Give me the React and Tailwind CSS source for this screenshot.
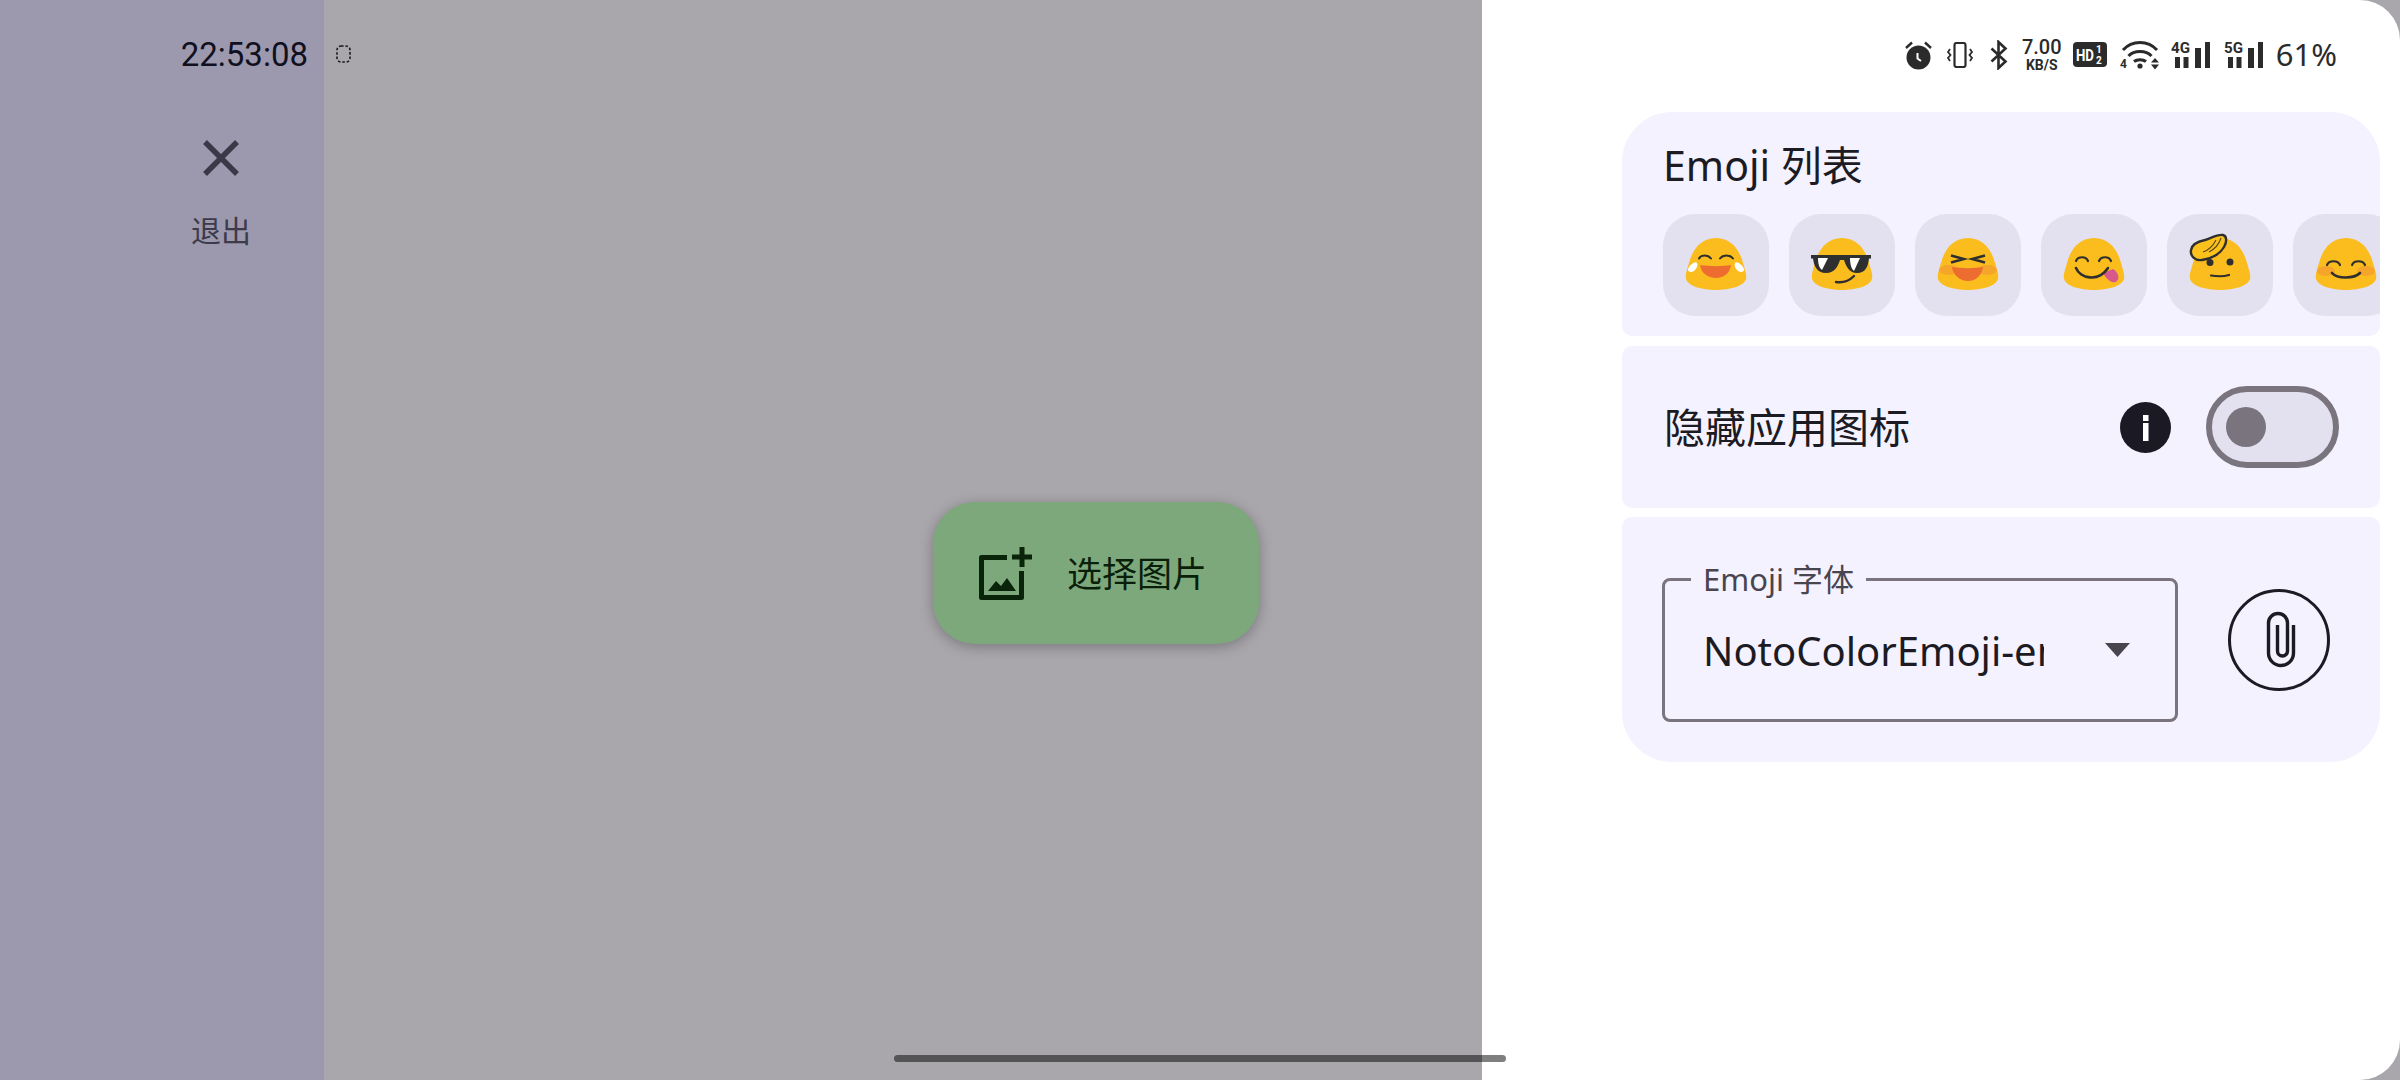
import React from "react";

function Blob({ children }) {
  return (
    <svg viewBox="0 0 106 102" className="w-full h-full">
      <path
        d="M53 24C69 24 77 37 80 49C82 56 84 61 83 65C81 72 67 76 53 76C39 76 25 72 23 65C22 61 24 56 26 49C29 37 37 24 53 24Z"
        fill="#fbbd1d"
      />
      {children}
    </svg>
  );
}

function LaughTears() {
  return (
    <Blob>
      <path d="M36 44.5C38 40.5 45 40.5 48 44.5M57 44.5C60 40.5 67 40.5 70 44.5" stroke="#2f2f2f" strokeWidth="2" fill="none" strokeLinecap="round" />
      <path d="M37 51C46 52.5 60 52.5 68 51C67 59 61 64 53 64C45 64 38 59 37 51Z" fill="#ed6c30" />
      <path d="M33 48C35 50 35 53 31 57C28 59 24.5 58 25 55C26 52 29 49 33 48Z" fill="#fff" />
      <path d="M73 48C71 50 71 53 75 57C78 59 81.5 58 81 55C80 52 77 49 73 48Z" fill="#fff" />
    </Blob>
  );
}

function Sunglasses() {
  return (
    <Blob>
      <path d="M22 41H82V44.5H80C79 52 77 59 68 59C60 59 57 52 55 46H51C49 52 46 59 37 59C28 59 25 52 24 44.5H22Z" fill="#2f2f2f" />
      <path d="M31 44H39L33 56C30 54 29 49 29 44Z" fill="#fff" />
      <path d="M63 44H71L65 57C62 55 61 49 61 44Z" fill="#fff" />
      <path d="M47 68C53 69 60 67 65 62" stroke="#2f2f2f" strokeWidth="2.4" fill="none" strokeLinecap="round" />
    </Blob>
  );
}

function Squint() {
  return (
    <Blob>
      <ellipse cx="34" cy="56" rx="10" ry="5" fill="#f19534" opacity="0.6" />
      <ellipse cx="72" cy="56" rx="10" ry="5" fill="#f19534" opacity="0.6" />
      <path d="M36 41.5L49 45L36 48.5M70 41.5L57 45L70 48.5" stroke="#2f2f2f" strokeWidth="2.4" fill="none" />
      <path d="M37 53C46 54.5 60 54.5 68 53C67 61 61 67 53 67C45 67 38 61 37 53Z" fill="#ed6c30" />
    </Blob>
  );
}

function Tongue() {
  return (
    <Blob>
      <path d="M35 47C37 42 45 42 47 47M58 47C60 42 68 42 70 47" stroke="#2f2f2f" strokeWidth="2.2" fill="none" strokeLinecap="round" />
      <path d="M62 59L72 55C77 58 79 64 76 67C73 70 67 68 62 59Z" fill="#d7598b" />
      <path d="M35 54C39 64 57 69 67 54" stroke="#2f2f2f" strokeWidth="2.6" fill="none" strokeLinecap="round" />
    </Blob>
  );
}

function Salute() {
  return (
    <Blob>
      <circle cx="43" cy="48.5" r="3.5" fill="#2f2f2f" />
      <circle cx="63" cy="48" r="3.5" fill="#2f2f2f" />
      <path d="M44 61.5C50 62.5 57 62.5 62 61" stroke="#2f2f2f" strokeWidth="2.2" fill="none" strokeLinecap="round" />
      <path d="M24 36C25 29 33 27 38 26C44 24 51 20 56 21C60 22 60 28 57 33C53 40 44 45 35 46C28 47 23 42 24 36Z" fill="#fcc21b" stroke="#2f2f2f" strokeWidth="2.4" />
      <path d="M36 38C42 36 46 32 49 26M42 38C48 35 52 30 54 24" stroke="#5f4a18" strokeWidth="1.2" fill="none" />
    </Blob>
  );
}

function Smile() {
  return (
    <Blob>
      <ellipse cx="33" cy="57" rx="9" ry="5" fill="#f19534" opacity="0.6" />
      <ellipse cx="73" cy="57" rx="9" ry="5" fill="#f19534" opacity="0.6" />
      <path d="M34 51C36 46 45 46 47 51M59 51C61 46 70 46 72 51" stroke="#2f2f2f" strokeWidth="2.2" fill="none" strokeLinecap="round" />
      <path d="M39 59C44 65 61 65 67 59" stroke="#2f2f2f" strokeWidth="2.6" fill="none" strokeLinecap="round" />
    </Blob>
  );
}

const emojis = [LaughTears, Sunglasses, Squint, Tongue, Salute, Smile];

function SignalIcon({ label }) {
  return (
    <svg width="39" height="29" viewBox="0 0 39 29">
      <text x="0" y="12.5" fontSize="14" fontWeight="700" fill="#2b2b2b" fontFamily="Roboto, sans-serif" textLength="19" lengthAdjust="spacingAndGlyphs">
        {label}
      </text>
      <rect x="4" y="17" width="5" height="11" fill="#2b2b2b" />
      <rect x="12.5" y="17" width="5" height="11" fill="#2b2b2b" />
      <rect x="24" y="8" width="6" height="20" fill="#2b2b2b" />
      <rect x="34" y="2" width="5" height="26" fill="#2b2b2b" />
    </svg>
  );
}

function StatusIcons() {
  return (
    <div className="flex items-center text-[#2b2b2b]">
      {/* alarm */}
      <svg width="27" height="30" viewBox="0 0 27 30">
        <circle cx="13.5" cy="17.5" r="12" fill="#2b2b2b" />
        <path d="M12.5 13V18.5L16 21" stroke="#fff" strokeWidth="2" fill="none" />
        <path d="M1 8L7 2.5M20 2.5L26 8" stroke="#2b2b2b" strokeWidth="2.4" fill="none" />
      </svg>
      {/* vibrate */}
      <svg width="26" height="26" viewBox="0 0 26 26" className="ml-[15px]">
        <rect x="7.5" y="1" width="11" height="24" rx="2" stroke="#2b2b2b" strokeWidth="2.2" fill="none" />
        <path d="M3 7L1 10L3.5 13L1 16L3 19M23 7L25 10L22.5 13L25 16L23 19" stroke="#2b2b2b" strokeWidth="1.8" fill="none" />
      </svg>
      {/* bluetooth */}
      <svg width="18" height="30" viewBox="0 0 18 30" className="ml-[17px]">
        <path d="M1.5 8.5L15.5 21.5L8.5 28V2L15.5 8.5L1.5 21.5" stroke="#2b2b2b" strokeWidth="2.6" fill="none" />
      </svg>
      <div className="ml-[14px] w-[40px] flex flex-col items-center font-['Roboto',sans-serif] font-medium leading-none">
        <span className="text-[20px] h-[20px]">7.00</span>
        <span className="text-[14px] font-bold mt-[1px]">KB/S</span>
      </div>
      {/* hd badge */}
      <svg width="34" height="25" viewBox="0 0 34 25" className="ml-[11px]">
        <rect width="34" height="25" rx="4" fill="#2b2b2b" />
        <text x="3" y="18.5" fontSize="17" fontWeight="700" fill="#fff" fontFamily="Roboto, sans-serif" textLength="18" lengthAdjust="spacingAndGlyphs">HD</text>
        <text x="23" y="11" fontSize="10" fontWeight="700" fill="#fff" fontFamily="Roboto, sans-serif">1</text>
        <text x="23" y="22" fontSize="10" fontWeight="700" fill="#fff" fontFamily="Roboto, sans-serif">2</text>
      </svg>
      {/* wifi */}
      <svg width="39" height="30" viewBox="0 0 39 30" className="ml-[13px]">
        <path d="M3 10C12 0 28 0 37 10M8.5 16C14 10 26 10 31.5 16M14 21.5C17 19 23 19 26 21.5" stroke="#2b2b2b" strokeWidth="3" fill="none" />
        <circle cx="20" cy="26" r="2.6" fill="#2b2b2b" />
        <text x="0" y="28" fontSize="12" fontWeight="700" fill="#2b2b2b" fontFamily="Roboto, sans-serif">4</text>
        <path d="M31 22.5L35 18L39 22.5ZM31 24.5H39L35 29.5Z" fill="#2b2b2b" />
      </svg>
      <div className="ml-[12px] flex">
        <SignalIcon label="4G" />
      </div>
      <div className="ml-[14px] flex">
        <SignalIcon label="5G" />
      </div>
      <span className="ml-[13px] text-[31px] leading-none font-['Noto_Sans',sans-serif]">61%</span>
    </div>
  );
}

function App() {
  return (
    <div className="relative flex w-[2400px] h-[1080px] overflow-hidden bg-[#a9a7ac] font-['Noto_Sans','Noto_Sans_CJK_SC',sans-serif]">
      {/* Left rail */}
      <aside className="w-[324px] shrink-0 bg-[#9c99ae] flex flex-col pt-[34px]">
        <div className="flex justify-end pr-[16px] h-[40px] items-center text-[33px] leading-none text-[#10101e] font-['Roboto',sans-serif]">
          22:53:08
        </div>
        <div className="ml-[118px] w-[206px] flex flex-col items-center mt-[66px] text-[#3d3b4a]">
          <svg width="36" height="36" viewBox="0 0 36 36">
            <path d="M2 2L34 34M34 2L2 34" stroke="#3b3948" strokeWidth="5.5" fill="none" />
          </svg>
          <span className="mt-[35px] text-[30px] leading-[40px]">退出</span>
        </div>
      </aside>

      {/* Preview area */}
      <main className="flex-1 pl-[12px] pt-[45px]">
        <svg width="15" height="18" viewBox="0 0 15 18" className="block">
          <rect x="1" y="1" width="13" height="16" rx="4" stroke="#1a1a1a" strokeWidth="1.6" fill="none" strokeDasharray="2.6 1.8" />
        </svg>
        <button className="ml-[597px] mt-[439px] w-[326px] h-[142px] rounded-[42px] bg-[#7da87b] shadow-[0_3px_14px_rgba(0,0,0,0.28)] flex items-center pl-[46px] text-[#0a1f0a]">
          <svg width="53" height="53" viewBox="0 0 53 53">
            <path d="M28 10.5H2.5V50.5H42.5V24" stroke="#0a2409" strokeWidth="5" fill="none" strokeLinejoin="round" />
            <path d="M43 0V20M33 10H53" stroke="#0a2409" strokeWidth="5" fill="none" />
            <path d="M9 44L17 34L22 39L28 31L37 44Z" fill="#0a2409" />
          </svg>
          <span className="ml-[35px] text-[35px] leading-none">选择图片</span>
        </button>
      </main>

      {/* Settings panel */}
      <section className="w-[918px] shrink-0 bg-white rounded-r-[40px] pl-[140px] pr-[20px]">
        <div className="h-[112px] flex justify-end items-start pt-[37px] pr-[43px]">
          <StatusIcons />
        </div>

        <div className="h-[224px] bg-[#f4f2fe] rounded-t-[50px] rounded-b-[10px] overflow-hidden pl-[41px] pt-[29px]">
          <h2 className="text-[41px] leading-[48px] font-normal text-[#1c1b23]">Emoji 列表</h2>
          <div className="flex gap-[20px] mt-[25px]">
            {emojis.map((Face, i) => (
              <div key={i} className="w-[106px] h-[102px] shrink-0 rounded-[32px] bg-[#e3e1ef]">
                <Face />
              </div>
            ))}
          </div>
        </div>

        <div className="mt-[10px] h-[162px] bg-[#f4f2fe] rounded-[10px] flex items-center pl-[42px] pr-[41px]">
          <span className="flex-1 text-[41px] leading-none text-[#1c1b23]">隐藏应用图标</span>
          <svg width="51" height="51" viewBox="0 0 51 51">
            <circle cx="25.5" cy="25.5" r="25.5" fill="#1b1a24" />
            <rect x="23" y="13" width="5.5" height="6" fill="#fff" />
            <rect x="23" y="21" width="5.5" height="18" fill="#fff" />
          </svg>
          <div className="ml-[35px] w-[133px] h-[82px] rounded-full border-[6px] border-[#79747e] bg-[#e3e1ef] flex items-center pl-[14px]">
            <div className="w-[40px] h-[40px] rounded-full bg-[#79747e]" />
          </div>
        </div>

        <div className="mt-[9px] h-[245px] bg-[#f4f2fe] rounded-t-[10px] rounded-b-[50px] flex items-start pl-[40px] pt-[61px]">
          <div className="relative w-[516px] h-[144px] rounded-[8px] border-[3px] border-[#79747e] flex items-center pl-[38px]">
            <span className="absolute -top-[21px] left-[26px] px-[12px] bg-[#f4f2fe] text-[31px] leading-[38px] text-[#49454f]">Emoji 字体</span>
            <span className="w-[341px] overflow-hidden whitespace-nowrap text-[40px] leading-[60px] text-[#1c1b23] mt-[2px]">NotoColorEmoji-emoji</span>
            <svg width="25" height="14" viewBox="0 0 25 14" className="ml-[61px]">
              <path d="M0 0H25L12.5 14Z" fill="#49454f" />
            </svg>
          </div>
          <button className="ml-[50px] mt-[11px] w-[102px] h-[102px] rounded-full">
            <svg width="102" height="102" viewBox="0 0 102 102" className="block">
              <circle cx="51" cy="51" r="49.5" stroke="#1c1b23" strokeWidth="3" fill="none" />
              <path d="M65.5 36V64a12.5 12.5 0 0 1-25 0V34a9.5 9.5 0 0 1 19 0V62a5 5 0 0 1-10 0V36" stroke="#1c1b23" strokeWidth="3.4" fill="none" />
            </svg>
          </button>
        </div>
      </section>

      {/* Gesture bar */}
      <div className="absolute left-[894px] top-[1055px] w-[612px] h-[7px] rounded-full bg-black/50" />
    </div>
  );
}

export default App;
